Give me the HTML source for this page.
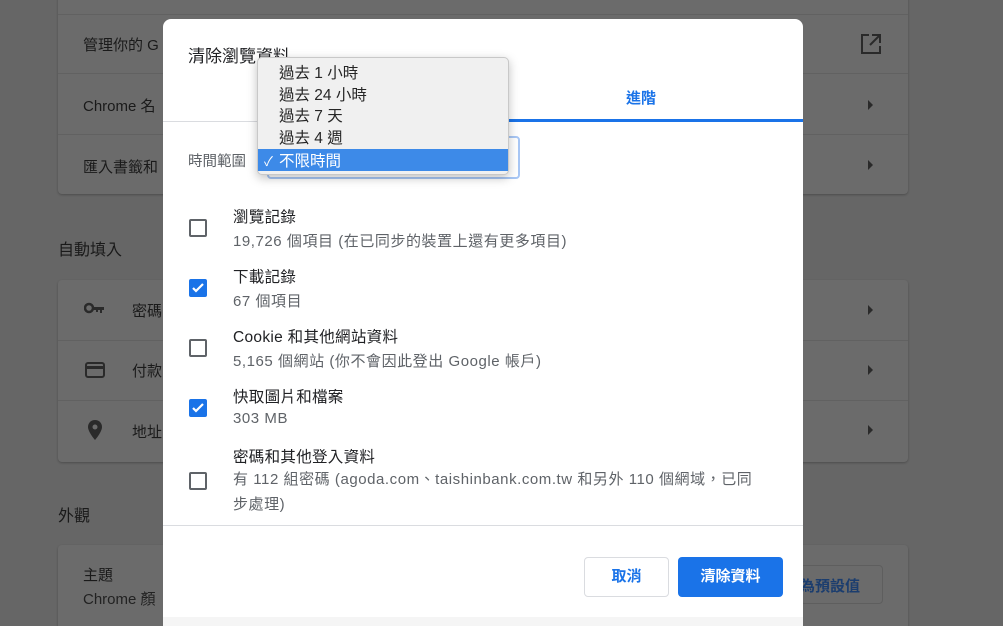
<!DOCTYPE html>
<html style="overflow:hidden;background:#666"><head><meta charset="utf-8"><style>
*{margin:0;padding:0;box-sizing:border-box}
body{width:1003px;height:626px;overflow:hidden;background:#666;font-family:"Liberation Sans","Noto Sans CJK TC",sans-serif;position:relative;color:#202124}
.card{position:absolute;left:58px;width:850px;background:#6b6b6b;border-radius:4px;box-shadow:0 1px 2px rgba(0,0,0,.25)}
.row{position:absolute;left:0;right:0;border-top:1px solid #616161;font-size:15px;color:#1e1e1e}
.t{position:absolute;font-size:15px;color:#1a1a1a}
.arr{position:absolute;left:868px;width:0;height:0;border-left:5px solid #2a2a2a;border-top:5px solid transparent;border-bottom:5px solid transparent}
.dlg{position:absolute;left:163px;top:19px;width:640px;height:607px;background:#fff;border-radius:8px 8px 0 0;overflow:hidden}
.cb{position:absolute;left:26px;width:18px;height:18px;border:2px solid #5f6368;border-radius:2px}
.cb.on{background:#1a73e8;border-color:#1a73e8}
.lbl{position:absolute;left:70px;font-size:15.5px;color:#202124;letter-spacing:.3px}
.sub{position:absolute;left:70px;font-size:15px;color:#5f6368;letter-spacing:.55px}
</style></head><body>
<div class="card" style="top:-10px;height:204px"></div>
<div class="row" style="top:14px;left:58px;width:850px"></div>
<div class="row" style="top:73px;left:58px;width:850px"></div>
<div class="row" style="top:134px;left:58px;width:850px"></div>
<div class="t" style="left:83px;top:34px">管理你的 G</div>
<div class="t" style="left:83px;top:95px">Chrome 名</div>
<div class="t" style="left:83px;top:156px">匯入書籤和</div>
<svg style="position:absolute;left:860px;top:33px" width="22" height="22" viewBox="0 0 22 22"><path d="M9 2H2v18h18v-7M12 2h8v8M20 2L10 12" fill="none" stroke="#2a2a2a" stroke-width="2"/></svg>
<div class="arr" style="top:100px"></div>
<div class="arr" style="top:160px"></div>
<div class="t" style="left:58px;top:236px;font-size:16px">自動填入</div>
<div class="card" style="top:280px;height:182px"></div>
<div class="row" style="top:340px;left:58px;width:850px"></div>
<div class="row" style="top:400px;left:58px;width:850px"></div>
<svg style="position:absolute;left:84px;top:302px" width="22" height="14" viewBox="0 0 22 14"><circle cx="5" cy="6" r="4" fill="none" stroke="#2a2a2a" stroke-width="2.5"/><path d="M9 5h11v3h-2v3h-2V8h-2v2h-2V8H9z" fill="#2a2a2a"/></svg>
<svg style="position:absolute;left:85px;top:362px" width="20" height="16"><rect x="1" y="1" width="18" height="14" rx="2" fill="none" stroke="#2a2a2a" stroke-width="2"/><rect x="1" y="4" width="18" height="3" fill="#2a2a2a"/></svg>
<svg style="position:absolute;left:88px;top:420px" width="14" height="20" viewBox="0 0 14 20"><path d="M7 0C3 0 0 3 0 7c0 5 7 13 7 13s7-8 7-13c0-4-3-7-7-7z" fill="#2a2a2a"/><circle cx="7" cy="7" r="2.5" fill="#6b6b6b"/></svg>
<div class="t" style="left:132px;top:300px">密碼</div>
<div class="t" style="left:132px;top:360px">付款</div>
<div class="t" style="left:132px;top:421px">地址</div>
<div class="arr" style="top:305px"></div>
<div class="arr" style="top:365px"></div>
<div class="arr" style="top:425px"></div>
<div class="t" style="left:58px;top:502px;font-size:16px">外觀</div>
<div class="card" style="top:545px;height:100px"></div>
<div class="t" style="left:83px;top:564px">主題</div>
<div class="t" style="left:83px;top:588px;color:#222">Chrome 顏</div>
<div style="position:absolute;left:800px;top:565px;width:83px;height:39px;border:1px solid #5e5e5e;border-radius:4px"></div>
<div class="t" style="left:800px;top:575px;color:#1b3d6e;font-weight:bold">為預設值</div>

<div class="dlg">
<div style="position:absolute;left:25px;top:23px;font-size:17px">清除瀏覽資料</div>
<div style="position:absolute;left:0;top:102px;width:317px;height:1px;background:#dadce0"></div>
<div style="position:absolute;left:317px;top:100px;width:323px;height:3px;background:#1a73e8"></div>
<div style="position:absolute;left:463px;top:68px;font-size:15px;color:#1a73e8;font-weight:bold">進階</div>
<div style="position:absolute;left:25px;top:131px;font-size:14.5px;color:#5f6368">時間範圍</div>
<div style="position:absolute;left:104px;top:117px;width:253px;height:43px;border:2px solid #a8c7f5;border-radius:4px"></div>
<div class="cb" style="top:200px"></div>
<div class="lbl" style="top:186px">瀏覽記錄</div>
<div class="sub" style="top:211px">19,726 個項目 (在已同步的裝置上還有更多項目)</div>
<div class="cb on" style="top:260px"><svg width="14" height="14" style="position:absolute;left:0;top:0"><path d="M2 7l3 3 7-7" fill="none" stroke="#fff" stroke-width="2.2"/></svg></div>
<div class="lbl" style="top:246px">下載記錄</div>
<div class="sub" style="top:271px">67 個項目</div>
<div class="cb" style="top:320px"></div>
<div class="lbl" style="top:306px">Cookie 和其他網站資料</div>
<div class="sub" style="top:331px">5,165 個網站 (你不會因此登出 Google 帳戶)</div>
<div class="cb on" style="top:380px"><svg width="14" height="14" style="position:absolute;left:0;top:0"><path d="M2 7l3 3 7-7" fill="none" stroke="#fff" stroke-width="2.2"/></svg></div>
<div class="lbl" style="top:366px">快取圖片和檔案</div>
<div class="sub" style="top:391px">303 MB</div>
<div class="cb" style="top:453px"></div>
<div class="lbl" style="top:426px">密碼和其他登入資料</div>
<div class="sub" style="top:448px;width:560px;line-height:25px;white-space:nowrap">有 112 組密碼 (agoda.com、taishinbank.com.tw 和另外 110 個網域，已同<br>步處理)</div>
<div style="position:absolute;left:0;top:506px;width:640px;height:1px;background:#dadce0"></div>
<div style="position:absolute;left:421px;top:538px;width:85px;height:40px;border:1px solid #dadce0;border-radius:4px;text-align:center;line-height:38px;font-size:15px;color:#1a73e8;font-weight:bold">取消</div>
<div style="position:absolute;left:515px;top:538px;width:105px;height:40px;background:#1a73e8;border-radius:4px;text-align:center;line-height:40px;font-size:15px;color:#fff;font-weight:bold">清除資料</div>
<div style="position:absolute;left:0;top:598px;width:640px;height:30px;background:#f5f5f5"></div>
</div>

<div style="position:absolute;left:257px;top:57px;width:252px;height:118px;background:#f0f0f0;border:1px solid #c8c8c8;border-radius:5px;box-shadow:0 3px 10px rgba(0,0,0,.25);font-size:15.5px;color:#262626">
<div style="position:absolute;left:21px;top:3px">過去 1 小時</div>
<div style="position:absolute;left:21px;top:25px">過去 24 小時</div>
<div style="position:absolute;left:21px;top:46px">過去 7 天</div>
<div style="position:absolute;left:21px;top:68px">過去 4 週</div>
<div style="position:absolute;left:0;top:91px;width:250px;height:22px;background:#3d8ae8;color:#fff"><span style="position:absolute;left:6px;top:2px;font-size:13px">✓</span><span style="position:absolute;left:21px;top:0px">不限時間</span></div>
</div>
</body></html>
